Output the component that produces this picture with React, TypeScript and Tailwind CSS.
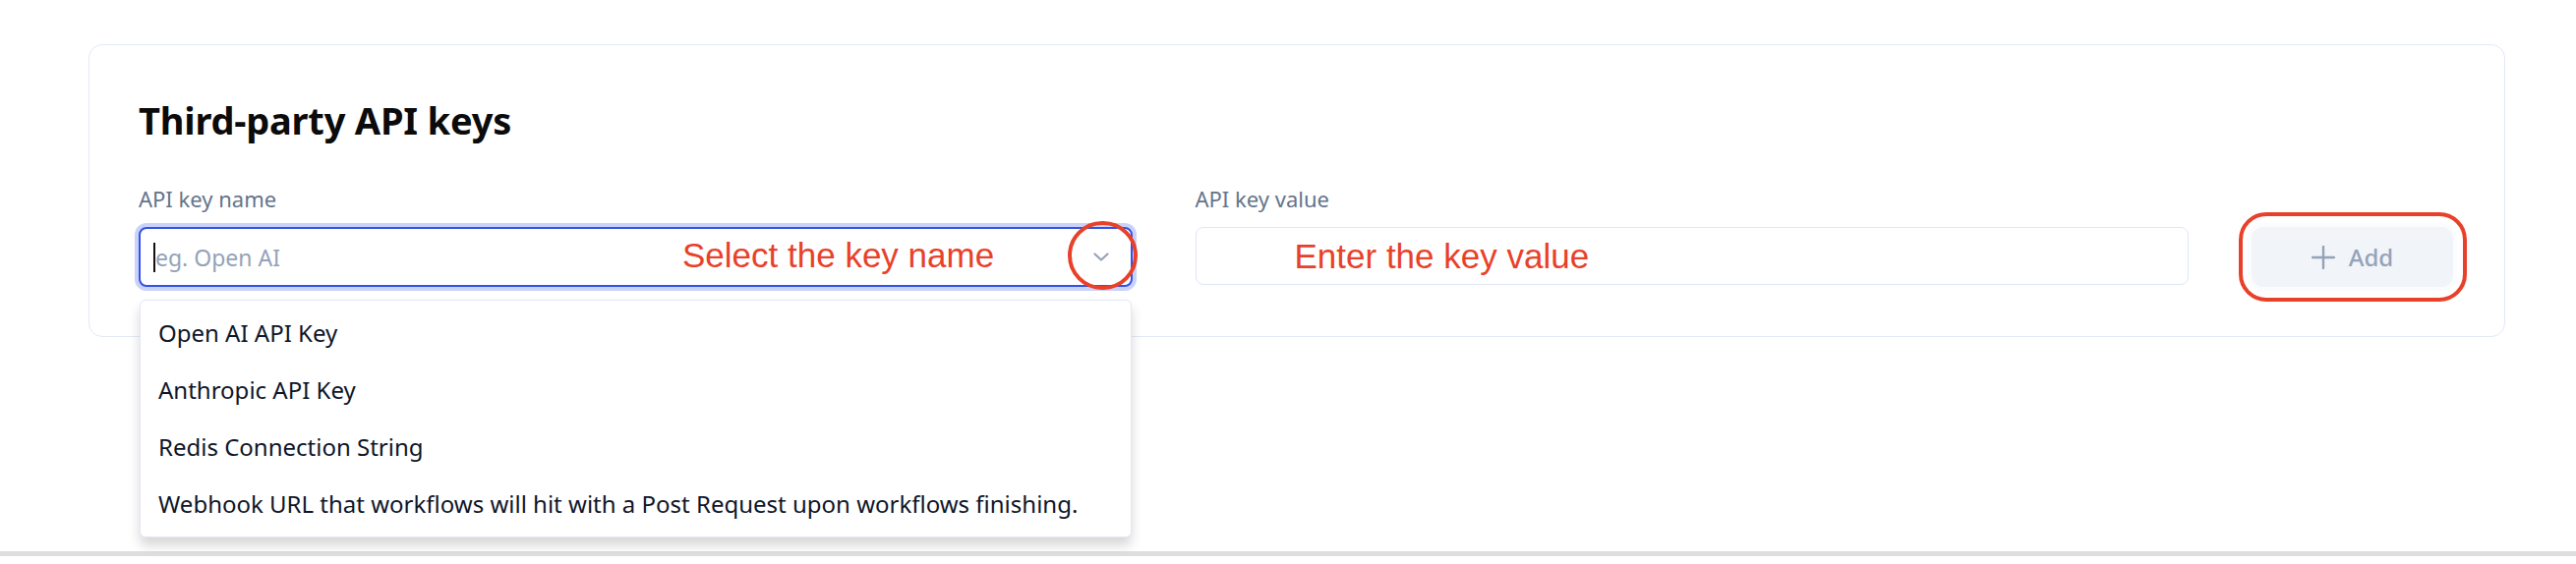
import React from 'react';

const options = [
  'Open AI API Key',
  'Anthropic API Key',
  'Redis Connection String',
  'Webhook URL that workflows will hit with a Post Request upon workflows finishing.',
];

const ChevronDown = () => (
  <svg width="16" height="9" viewBox="0 0 16 9" fill="none">
    <path d="M1.5 1.5L8 7.5L14.5 1.5" stroke="#94a3b8" strokeWidth="2.2" strokeLinecap="round" strokeLinejoin="round" />
  </svg>
);

const PlusIcon = () => (
  <svg width="24" height="24" viewBox="0 0 24 24" fill="none">
    <path d="M12 1v22M1 12h22" stroke="#94a3b8" strokeWidth="2.4" strokeLinecap="round" />
  </svg>
);

const App: React.FC = () => {
  return (
    <div className="h-[574px] bg-white flex flex-col overflow-hidden" style={{ fontFamily: '"Noto Sans", "Open Sans", sans-serif' }}>
      <div className="flex-1 pt-[45px] pl-[90px]">
        {/* Card */}
        <div className="w-[2458px] bg-white border border-[#e3e8f6] rounded-[14px] pt-[52px] pb-[50px] pl-[50px] pr-[52px]">
          <h2 className="text-[38px] leading-[48px] font-bold text-[#0b0b0b] tracking-[-0.2px]">Third-party API keys</h2>

          <div className="mt-[41px] flex items-start gap-[64px]">
            {/* Key name */}
            <div className="flex-1 flex flex-col gap-[14px]">
              <label className="text-[22px] leading-[30px] text-[#64748b]">API key name</label>
              <div className="relative h-[61px]">
                <div className="h-full rounded-[8px] border-2 border-[#3352e6] shadow-[0_0_0_4px_#c9d3fa] bg-white flex items-center pl-[13px] pr-[22px]">
                  <div className="w-[2px] h-[30px] bg-[#111]" />
                  <span className="text-[23px] leading-[32px] text-[#94a3b8] flex-1">eg. Open AI</span>
                  <ChevronDown />
                </div>

                {/* annotation */}
                <span
                  className="absolute left-[553px] top-[9px] text-[35px] leading-[40px] text-[#e8412a] whitespace-nowrap"
                  style={{ fontFamily: '"Liberation Sans", Arial, sans-serif' }}
                >
                  Select the key name
                </span>
                <div className="absolute left-[945px] top-[-6px] w-[71px] h-[70px] rounded-full border-4 border-[#e8412a]" />

                {/* Dropdown */}
                <div className="absolute left-[1px] right-[1px] top-[74px] bg-white border border-[#e3e8f6] rounded-[6px] py-[4px] shadow-[0_8px_12px_rgba(0,0,0,0.16)] z-10">
                  {options.map((o) => (
                    <div key={o} className="h-[58px] flex items-center px-[18px] text-[24px] leading-[32px] text-[#0f1629]">
                      {o}
                    </div>
                  ))}
                </div>
              </div>
            </div>

            {/* Key value */}
            <div className="flex-1 flex flex-col gap-[14px]">
              <label className="text-[22px] leading-[30px] text-[#64748b]">API key value</label>
              <div className="relative h-[59px] rounded-[8px] border border-[#e0e6f7] bg-white">
                <span
                  className="absolute left-[100px] top-[9px] text-[35px] leading-[40px] text-[#e8412a] whitespace-nowrap"
                  style={{ fontFamily: '"Liberation Sans", Arial, sans-serif' }}
                >
                  Enter the key value
                </span>
              </div>
            </div>

            {/* Add */}
            <div className="relative mt-[44px]">
              <button className="w-[205px] h-[61px] rounded-[12px] bg-[#f1f4f9] shadow-[0_0_0_4px_#fbfcfe] flex items-center justify-center gap-[14px] text-[24px] font-medium text-[#94a3b8]">
                <PlusIcon />
                <span className="leading-[32px]">Add</span>
              </button>
              <div className="absolute left-[-13px] top-[-15px] w-[232px] h-[91px] rounded-[28px] border-4 border-[#e8412a] pointer-events-none" />
            </div>
          </div>
        </div>
      </div>
      <div className="h-[5px] bg-[#dedede]" />
      <div className="h-[8px] bg-white" />
    </div>
  );
};

export default App;
